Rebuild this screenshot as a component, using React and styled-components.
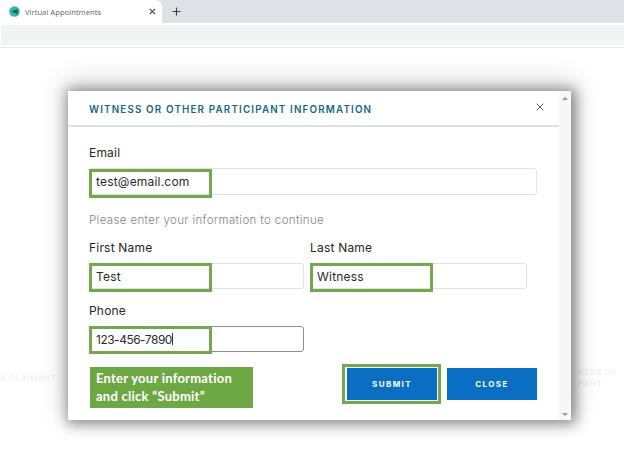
import React from "react";
import styled, { createGlobalStyle } from "styled-components";

const Global = createGlobalStyle`
  html, body { margin: 0; padding: 0; background: #fff; }
  body { width: 624px; height: 451px; overflow: hidden; font-family: Inter, "Noto Sans", sans-serif; }
`;
const Page = styled.div`position: relative; width: 624px; height: 451px; overflow: hidden; background: #fff;`;
const TabStrip = styled.div`display: flex; align-items: flex-start; height: 23px; background: #dee1e6;`;
const Tab = styled.div`
  display: flex; align-items: center; width: 162px; height: 25px; box-sizing: border-box;
  padding: 0 0 2px 9px; background: #fff; border-radius: 0 7px 0 0; color: #5f6368;
  font: 7.7px "Open Sans", sans-serif;
`;
const TabTitle = styled.span`margin-left: 5px; flex: 1;`;
const TabClose = styled.svg`width: 7px; height: 7px; margin-right: 6px;`;
const NewTab = styled.svg`width: 9px; height: 9px; margin: 7px 0 0 10px;`;
const Toolbar = styled.div`height: 20px; margin-top: 2px; background: #f1f3f4; margin-left: 1px;`;
const ToolbarRule = styled.div`height: 1px; margin-top: 2px; background: #e6e8ea;`;
const Ghost = styled.div`
  position: absolute; color: #f1f2f3; font: 600 8px/11px Inter, sans-serif; letter-spacing: .6px;
  left: ${p => p.$left}px; top: ${p => p.$top}px;
`;
const Modal = styled.div`
  position: absolute; left: 68px; top: 91px; width: 503px; height: 329px; display: flex;
  background: #fff; box-shadow: 2px 1px 12px 3px rgba(0,0,0,.42), 0 -6px 26px 4px rgba(0,0,0,.14);
`;
const Content = styled.div`flex: 1; min-width: 0;`;
const ScrollBar = styled.div`
  width: 12px; background: #f7f7f7; display: flex; flex-direction: column; justify-content: space-between;
  align-items: center; padding: 6px 0 4px; box-sizing: border-box;
`;
const Arrow = styled.div`
  width: 0; height: 0; border-left: 3px solid transparent; border-right: 3px solid transparent;
  ${p => p.$down ? "border-top: 3px solid #9a9a9a;" : "border-bottom: 3px solid #9a9a9a;"}
`;
const Header = styled.div`
  height: 36px; box-sizing: border-box; display: flex; justify-content: space-between; align-items: center;
  padding: 0 15px 0 21px; border-bottom: 2px solid #dfe2e4;
`;
const Title = styled.h2`
  margin: 2px 0 0; color: #14697d; font: 600 9.8px Inter, sans-serif; letter-spacing: 1.17px; white-space: nowrap;
`;
const CloseX = styled.svg`width: 8px; height: 8px; margin-bottom: 3px;`;
const Form = styled.div`padding: 19px 22px 0 21px; display: flex; flex-direction: column;`;
const Label = styled.label`
  display: block; height: 14px; color: #262626; font: 400 12px/14px Inter, sans-serif; letter-spacing: .2px; margin-bottom: 8px;
`;
const Field = styled.div`
  position: relative; box-sizing: border-box; height: ${p => p.$h || 26}px; border: 1px solid ${p => p.$active ? "#8d8d8d" : "#e2e2e2"};
  border-radius: 3px; display: flex; align-items: center; padding-left: 6px;
  color: #2b2b2b; font: 400 12px Inter, sans-serif; letter-spacing: ${p => p.$active ? "-.5px" : ".2px"};
`;
const Highlight = styled.span`
  position: absolute; left: -1px; top: ${p => p.$top ?? -1}px; width: ${p => p.$w}px; height: ${p => p.$h}px; box-sizing: border-box;
  border: 3px solid #74a84e; pointer-events: none;
`;
const Caret = styled.span`display: inline-block; width: 1px; height: 12px; background: #333;`;
const Hint = styled.p`margin: 18px 0 14px; height: 14px; color: #80868a; font: 300 11.5px/14px Inter, sans-serif; letter-spacing: .37px;`;
const Row = styled.div`display: grid; grid-template-columns: 215px 217px; column-gap: 6px;`;
const PhoneBlock = styled.div`width: 215px; margin-top: 15px;`;
const ActionRow = styled.div`display: flex; justify-content: space-between; align-items: flex-start; margin-top: 15px;`;
const Callout = styled.div`
  width: 163px; height: 41px; margin-left: 1px; box-sizing: border-box; padding: 3px 6px 0; background: #6ea845;
  color: #fff; font: 700 13px/17.5px Lato, sans-serif; letter-spacing: .25px; white-space: nowrap;
`;
const Buttons = styled.div`display: flex; gap: 10px; margin-top: 1px;`;
const Button = styled.button`
  position: relative; width: 90px; height: 32px; border: 0; background: #0a6fc2; color: #fff; padding: 0;
  font: 700 8px Inter, sans-serif; letter-spacing: 1.4px;
`;
const ButtonRing = styled.span`
  position: absolute; left: -5px; top: -4px; width: 99px; height: 40px; box-sizing: border-box;
  border: 3px solid #74a84e; box-shadow: inset 0 0 0 1px #fff;
`;

export default function App() {
  return (
    <Page>
      <Global />
      <TabStrip>
        <Tab>
          <svg width="11" height="11" viewBox="0 0 11 11"><circle cx="5.5" cy="5.5" r="5.3" fill="#39b5a4" /><path d="M2.6 5.6 8.6 3v5.2L5.5 6.8z" fill="#0f5a63" /></svg>
          <TabTitle>Virtual Appointments</TabTitle>
          <TabClose viewBox="0 0 7 7"><path d="M.8.8l5.4 5.4M6.2.8.8 6.2" stroke="#4a4a4a" strokeWidth="1.2" /></TabClose>
        </Tab>
        <NewTab viewBox="0 0 9 9"><path d="M4.5.5v8M.5 4.5h8" stroke="#3c4043" strokeWidth="1.1" /></NewTab>
      </TabStrip>
      <Toolbar />
      <ToolbarRule />
      <Ghost $left={0} $top={373}>A CLAIMANT</Ghost>
      <Ghost $left={578} $top={367}>NESS OR<br />PANT</Ghost>
      <Modal>
        <Content>
          <Header>
            <Title>WITNESS OR OTHER PARTICIPANT INFORMATION</Title>
            <CloseX viewBox="0 0 8 8"><path d="M.7.7l6.6 6.6M7.3.7.7 7.3" stroke="#555" strokeWidth="1" /></CloseX>
          </Header>
          <Form>
            <Label>Email</Label>
            <Field $h={27}>test@email.com<Highlight $w={123} $h={29} $top={0} /></Field>
            <Hint>Please enter your information to continue</Hint>
            <Row>
              <div>
                <Label>First Name</Label>
                <Field>Test<Highlight $w={123} $h={29} /></Field>
              </div>
              <div>
                <Label>Last Name</Label>
                <Field>Witness<Highlight $w={123} $h={29} /></Field>
              </div>
            </Row>
            <PhoneBlock>
              <Label>Phone</Label>
              <Field $active>123-456-7890<Caret /><Highlight $w={123} $h={28} /></Field>
            </PhoneBlock>
            <ActionRow>
              <Callout>Enter your information<br />and click “Submit”</Callout>
              <Buttons>
                <Button>SUBMIT<ButtonRing /></Button>
                <Button>CLOSE</Button>
              </Buttons>
            </ActionRow>
          </Form>
        </Content>
        <ScrollBar><Arrow /><Arrow $down /></ScrollBar>
      </Modal>
    </Page>
  );
}
